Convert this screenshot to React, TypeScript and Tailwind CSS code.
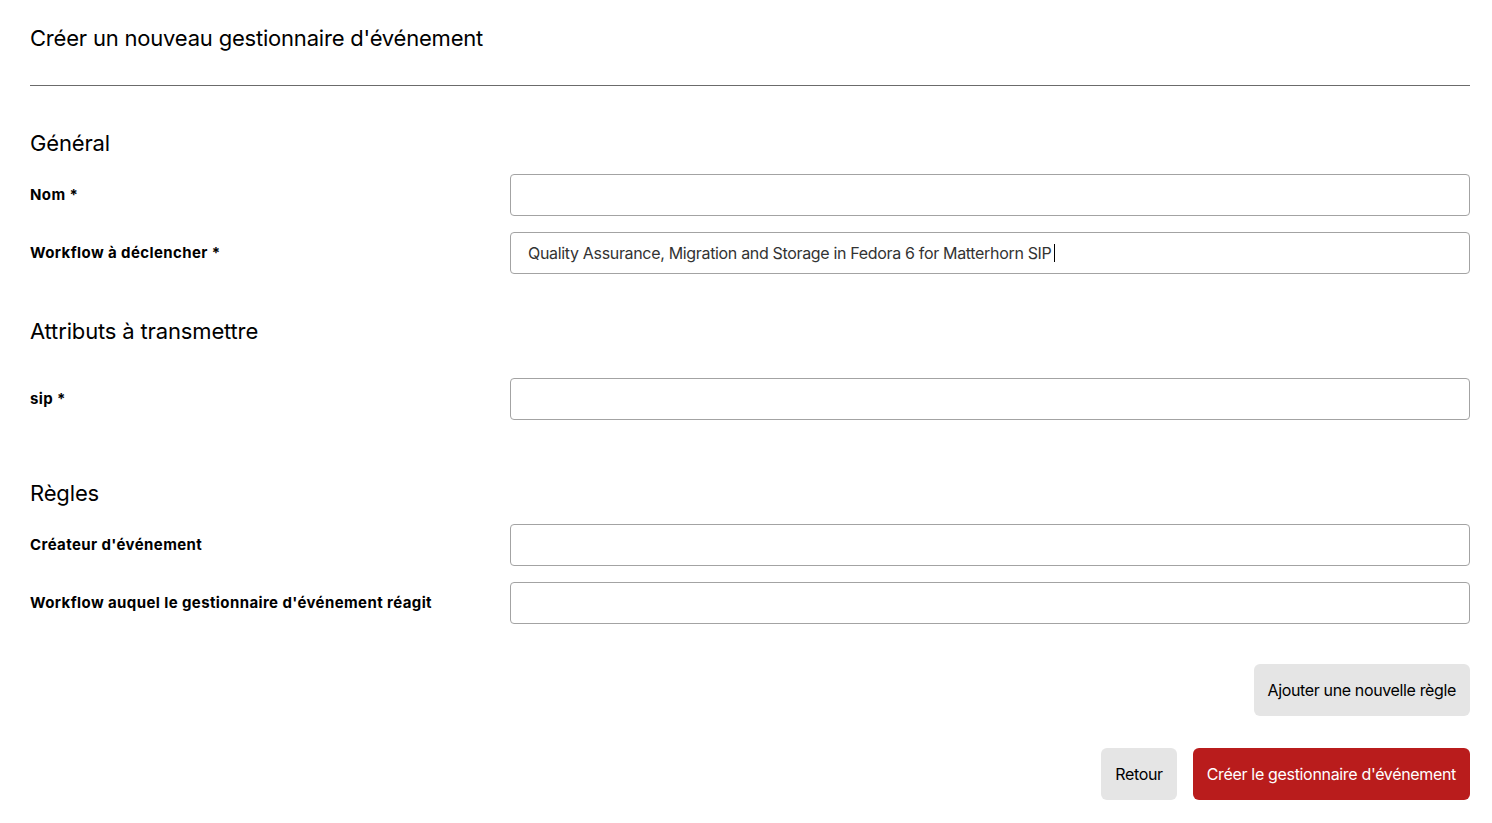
import type { ReactNode } from 'react';

const fieldClass =
  'h-[42px] w-full rounded-[4px] border border-[#a3a3a3] bg-white pl-[17px] pr-3 text-[16px] tracking-[-0.33px] text-[#333] outline-none';

const greyButton =
  'h-[52px] rounded-[6px] bg-[#e5e5e5] px-[14px] text-[16px] tracking-[-0.36px] text-black';

function Row({ label, children }: { label: string; children: ReactNode }) {
  return (
    <div className="grid grid-cols-[480px_1fr] items-center">
      <label className="text-[15px] font-bold tracking-[0.4px] text-black">{label}</label>
      {children}
    </div>
  );
}

function SectionTitle({ children, className }: { children: ReactNode; className: string }) {
  return (
    <h2 className={`text-[22px] leading-[28px] tracking-[-0.15px] text-black ${className}`}>
      {children}
    </h2>
  );
}

const workflow = 'Quality Assurance, Migration and Storage in Fedora 6 for Matterhorn SIP';

export default function App() {
  return (
    <div className="min-h-screen bg-white pl-[30px] pr-[22px] pt-[24px] font-['Inter',sans-serif] text-black">
      <h1 className="text-[22px] leading-[28px] tracking-[-0.2px]">
        Créer un nouveau gestionnaire d'événement
      </h1>
      <hr className="mt-[33px] border-0 border-t border-[#6b6b6b]" />

      <SectionTitle className="mt-[43px]">Général</SectionTitle>
      <div className="mt-[17px] flex flex-col gap-4">
        <Row label="Nom *">
          <input className={fieldClass} />
        </Row>
        <Row label="Workflow à déclencher *">
          <div className="relative">
            <input className={fieldClass} defaultValue={workflow} readOnly />
            {/* fake caret after the value */}
            <div className="pointer-events-none absolute inset-0 flex items-center pl-[17px] text-[16px] tracking-[-0.33px]">
              <span className="invisible">{workflow}</span>
              <span className="ml-[4px] h-[18px] w-px bg-black" />
            </div>
          </div>
        </Row>
      </div>

      <SectionTitle className="mt-[43px]">Attributs à transmettre</SectionTitle>
      <div className="mt-[33px]">
        <Row label="sip *">
          <input className={fieldClass} />
        </Row>
      </div>

      <SectionTitle className="mt-[59px]">Règles</SectionTitle>
      <div className="mt-[17px] flex flex-col gap-4">
        <Row label="Créateur d'événement">
          <input className={fieldClass} />
        </Row>
        <Row label="Workflow auquel le gestionnaire d'événement réagit">
          <input className={fieldClass} />
        </Row>
      </div>

      <div className="mt-[40px] flex justify-end">
        <button className={greyButton}>Ajouter une nouvelle règle</button>
      </div>

      <div className="mt-[32px] flex justify-end gap-4">
        <button className={greyButton}>Retour</button>
        <button className="h-[52px] rounded-[6px] bg-[#b91c1c] px-[14px] text-[16px] tracking-[-0.33px] text-white">
          Créer le gestionnaire d'événement
        </button>
      </div>
    </div>
  );
}
